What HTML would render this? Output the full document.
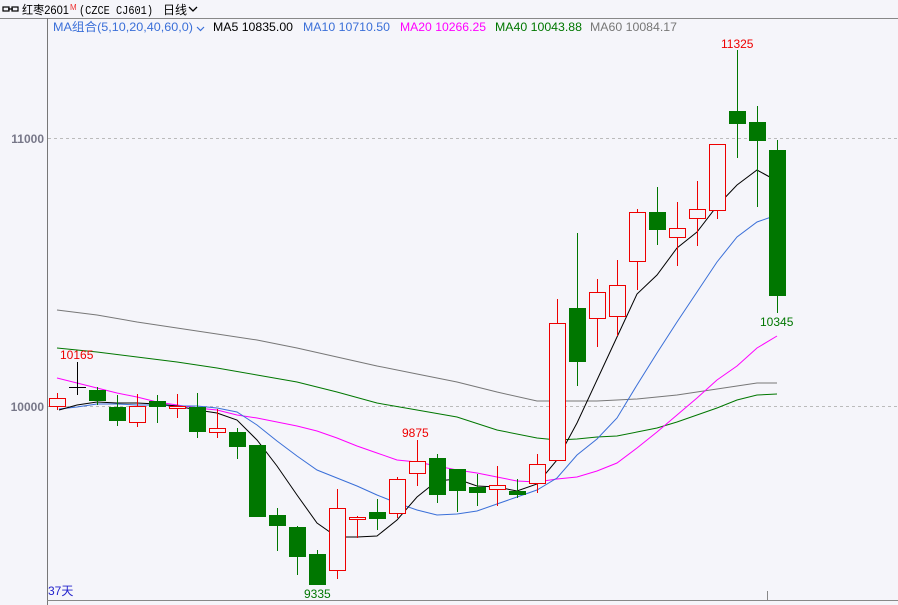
<!DOCTYPE html>
<html><head><meta charset="utf-8"><style>
body{margin:0;width:898px;height:605px;overflow:hidden;background:#f5f5fa;font-family:"Liberation Sans","Noto Sans CJK SC",sans-serif}
svg{position:absolute;left:0;top:0}
</style></head><body>
<svg width="898" height="605" xmlns="http://www.w3.org/2000/svg" font-family="Liberation Sans, Noto Sans CJK SC, sans-serif">
<rect width="898" height="605" fill="#f5f5fa"/>
<g stroke="#000" stroke-width="1.2" fill="none"><rect x="3" y="7" width="6" height="4"/><rect x="12" y="7" width="6" height="4"/><line x1="8" y1="9" x2="13" y2="9"/></g>
<text x="22" y="14" font-size="12" fill="#000" textLength="47" lengthAdjust="spacingAndGlyphs">红枣2601</text>
<text x="70" y="10" font-size="8" fill="#e33">M</text>
<text x="79" y="14" font-size="12" fill="#000" font-family="Liberation Mono, monospace" textLength="74" lengthAdjust="spacingAndGlyphs">(CZCE CJ601)</text>
<text x="163" y="14" font-size="12" fill="#000">日线</text>
<path d="M189 7l4 4 4-4" stroke="#000" stroke-width="1.3" fill="none"/>
<line x1="0" y1="18.5" x2="898" y2="18.5" stroke="#888"/>
<line x1="47.5" y1="18" x2="47.5" y2="605" stroke="#777"/>
<line x1="47" y1="600.5" x2="898" y2="600.5" stroke="#888"/>
<line x1="767.5" y1="591" x2="767.5" y2="600" stroke="#888"/>
<g font-size="12">
<text x="53" y="31" fill="#3a6fd8" textLength="140" lengthAdjust="spacingAndGlyphs">MA组合(5,10,20,40,60,0)</text>
<path d="M197 27l3.5 3.5 3.5-3.5" stroke="#3a6fd8" stroke-width="1.2" fill="none"/>
<text x="213" y="31" fill="#000" textLength="80" lengthAdjust="spacingAndGlyphs">MA5 10835.00</text>
<text x="303" y="31" fill="#3a6fd8" textLength="87" lengthAdjust="spacingAndGlyphs">MA10 10710.50</text>
<text x="400" y="31" fill="#f0f" textLength="86" lengthAdjust="spacingAndGlyphs">MA20 10266.25</text>
<text x="495" y="31" fill="#070" textLength="87" lengthAdjust="spacingAndGlyphs">MA40 10043.88</text>
<text x="590" y="31" fill="#777" textLength="87" lengthAdjust="spacingAndGlyphs">MA60 10084.17</text>
</g>
<g font-size="12" font-weight="bold" fill="#778">
<text x="44" y="143" text-anchor="end">11000</text>
<text x="44" y="411" text-anchor="end">10000</text>
</g>
<g stroke="#bbb" stroke-dasharray="3,3"><line x1="48" y1="138.5" x2="898" y2="138.5"/><line x1="48" y1="406.5" x2="898" y2="406.5"/></g>
<text x="48" y="595" font-size="12" fill="#22c">37天</text>
<g fill="none" stroke-width="1">
<polyline stroke="#777" points="57,310 97,315 137,322 177,328 217,334 257,340 297,348 337,357 377,366 417,374 457,382 497,392 537,401 557,401 577,401 597,401 617,400 637,399 657,397 677,395 697,392 717,389 737,386 757,383 777,383"/>
<polyline stroke="#070" points="57,348 97,352 137,357 177,362 217,368 257,375 297,382 337,392 377,403 417,410 457,417 497,430 537,438 557,440 577,439 597,437 617,436 637,432 657,428 677,422 697,415 717,408 737,400 757,395 777,394"/>
<polyline stroke="#f0f" points="57,378 77,383 97,388 117,393 137,397 157,402 177,405 197,408 217,410 237,415 257,418 277,422 297,426 317,431 337,438 357,446 377,453 397,460 417,462 437,466 457,470 477,473 497,477 517,481 537,482 557,479 577,477 597,471 617,463 637,448 657,432 677,415 697,398 717,380 737,366 757,348 777,336"/>
<polyline stroke="#3a6fd8" points="59,409 77,407 97,404 117,404 137,405 157,405 177,406 197,406 217,408 237,412 257,425 277,441 297,456 317,470 337,478 357,486 377,495 397,503 417,510 437,515 457,514 477,511 497,504 517,497 537,490 557,478 577,455 597,439 617,418 637,385 657,353 677,322 697,292 717,262 737,237 757,222 777,215"/>
<polyline stroke="#000" points="59,410 77,405 97,402 117,403 137,403 157,404 177,406 197,410 217,413 237,420 257,440 277,466 297,495 317,523 337,537 357,537 377,536 397,520 417,497 437,481 457,479 477,486 497,487 517,491 537,484 557,460 577,423 597,380 617,337 637,294 657,275 677,248 697,232 717,206 737,185 757,170 777,181"/>
</g>
<g stroke-width="1">
<g stroke="#e00" fill="#f5f5fa">
<line x1="57.5" y1="393" x2="57.5" y2="410"/><rect x="49.5" y="398.5" width="16" height="8"/>
<line x1="137.5" y1="394" x2="137.5" y2="427"/><rect x="129.5" y="406.5" width="16" height="16"/>
<line x1="177.5" y1="394" x2="177.5" y2="418"/><rect x="169.5" y="406.5" width="16" height="2"/>
<line x1="217.5" y1="409" x2="217.5" y2="438"/><rect x="209.5" y="428.5" width="16" height="4"/>
<line x1="337.5" y1="489" x2="337.5" y2="579"/><rect x="329.5" y="508.5" width="16" height="62"/>
<line x1="357.5" y1="516" x2="357.5" y2="538"/><rect x="349.5" y="517.5" width="16" height="2"/>
<line x1="397.5" y1="477" x2="397.5" y2="518"/><rect x="389.5" y="479.5" width="16" height="34"/>
<line x1="417.5" y1="440" x2="417.5" y2="486"/><rect x="409.5" y="461.5" width="16" height="12"/>
<line x1="497.5" y1="466" x2="497.5" y2="506"/><rect x="489.5" y="485.5" width="16" height="4"/>
<line x1="537.5" y1="454" x2="537.5" y2="493"/><rect x="529.5" y="464.5" width="16" height="19"/>
<line x1="557.5" y1="299" x2="557.5" y2="460"/><rect x="549.5" y="323.5" width="16" height="137"/>
<line x1="597.5" y1="279" x2="597.5" y2="347"/><rect x="589.5" y="292.5" width="16" height="26"/>
<line x1="617.5" y1="260" x2="617.5" y2="336"/><rect x="609.5" y="285.5" width="16" height="31"/>
<line x1="637.5" y1="209" x2="637.5" y2="290"/><rect x="629.5" y="212.5" width="16" height="49"/>
<line x1="677.5" y1="202" x2="677.5" y2="266"/><rect x="669.5" y="228.5" width="16" height="9"/>
<line x1="697.5" y1="181" x2="697.5" y2="246"/><rect x="689.5" y="209.5" width="16" height="9"/>
<line x1="717.5" y1="144" x2="717.5" y2="219"/><rect x="709.5" y="144.5" width="16" height="66"/>
</g>
<g stroke="#000"><line x1="77.5" y1="362" x2="77.5" y2="395"/><line x1="69" y1="387.5" x2="86" y2="387.5"/></g>
<g stroke="#070" fill="#070">
<line x1="97.5" y1="387" x2="97.5" y2="405"/><rect x="89.5" y="390.5" width="16" height="10"/>
<line x1="117.5" y1="395" x2="117.5" y2="426"/><rect x="109.5" y="407.5" width="16" height="13"/>
<line x1="157.5" y1="395" x2="157.5" y2="423"/><rect x="149.5" y="401.5" width="16" height="5"/>
<line x1="197.5" y1="393" x2="197.5" y2="438"/><rect x="189.5" y="407.5" width="16" height="24"/>
<line x1="237.5" y1="428" x2="237.5" y2="459"/><rect x="229.5" y="432.5" width="16" height="14"/>
<line x1="257.5" y1="445" x2="257.5" y2="517"/><rect x="249.5" y="445.5" width="16" height="71"/>
<line x1="277.5" y1="508" x2="277.5" y2="551"/><rect x="269.5" y="515.5" width="16" height="10"/>
<line x1="297.5" y1="526" x2="297.5" y2="575"/><rect x="289.5" y="527.5" width="16" height="29"/>
<line x1="317.5" y1="550" x2="317.5" y2="585"/><rect x="309.5" y="554.5" width="16" height="30"/>
<line x1="377.5" y1="499" x2="377.5" y2="530"/><rect x="369.5" y="512.5" width="16" height="6"/>
<line x1="437.5" y1="454" x2="437.5" y2="503"/><rect x="429.5" y="458.5" width="16" height="36"/>
<line x1="457.5" y1="469" x2="457.5" y2="512"/><rect x="449.5" y="469.5" width="16" height="21"/>
<line x1="477.5" y1="474" x2="477.5" y2="506"/><rect x="469.5" y="487.5" width="16" height="5"/>
<line x1="517.5" y1="479" x2="517.5" y2="498"/><rect x="509.5" y="491.5" width="16" height="3"/>
<line x1="577.5" y1="233" x2="577.5" y2="386"/><rect x="569.5" y="308.5" width="16" height="53"/>
<line x1="657.5" y1="187" x2="657.5" y2="245"/><rect x="649.5" y="212.5" width="16" height="17"/>
<line x1="737.5" y1="50" x2="737.5" y2="158"/><rect x="729.5" y="111.5" width="16" height="12"/>
<line x1="757.5" y1="106" x2="757.5" y2="207"/><rect x="749.5" y="122.5" width="16" height="18"/>
<line x1="777.5" y1="140" x2="777.5" y2="313"/><rect x="769.5" y="150.5" width="16" height="145"/>
</g>
</g>
<g font-size="12">
<text x="60" y="359" fill="#e00">10165</text>
<text x="402" y="437" fill="#e00">9875</text>
<text x="721" y="48" fill="#e00">11325</text>
<text x="304" y="598" fill="#070">9335</text>
<text x="760" y="326" fill="#070">10345</text>
</g>
</svg>
</body></html>
